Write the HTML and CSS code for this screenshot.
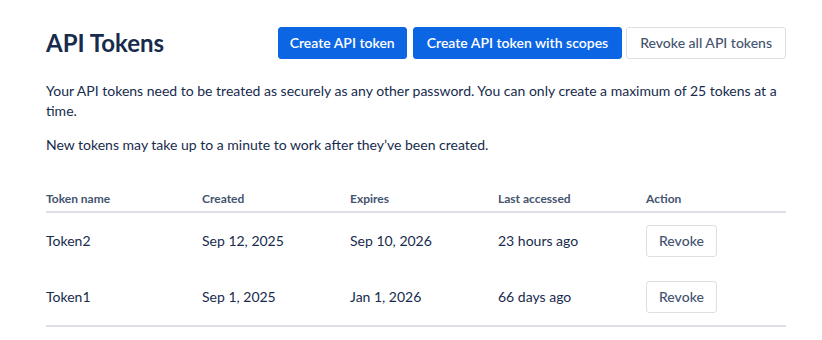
FILE: index.html
```html
<!DOCTYPE html>
<html>
<head>
<meta charset="utf-8">
<link rel="stylesheet" href="styles.css">
</head>
<body>
<main class="page">
  <header class="head">
    <h1 class="title">API Tokens</h1>
    <div class="actions">
      <button class="btn btn-primary btn-first">Create API token</button>
      <button class="btn btn-primary">Create API token with scopes</button>
      <button class="btn btn-default">Revoke all API tokens</button>
    </div>
  </header>
  <p class="desc">Your API tokens need to be treated as securely as any other password. You can only create a maximum of 25 tokens at a time.</p>
  <p class="desc">New tokens may take up to a minute to work after they’ve been created.</p>
  <table class="tokens">
    <thead>
      <tr>
        <th class="c1">Token name</th>
        <th class="c2">Created</th>
        <th class="c3">Expires</th>
        <th class="c4">Last accessed</th>
        <th class="c5">Action</th>
      </tr>
    </thead>
    <tbody>
      <tr>
        <td>Token2</td>
        <td>Sep 12, 2025</td>
        <td>Sep 10, 2026</td>
        <td>23 hours ago</td>
        <td><button class="btn btn-default btn-small">Revoke</button></td>
      </tr>
      <tr>
        <td>Token1</td>
        <td>Sep 1, 2025</td>
        <td>Jan 1, 2026</td>
        <td>66 days ago</td>
        <td><button class="btn btn-default btn-small">Revoke</button></td>
      </tr>
    </tbody>
  </table>
</main>
</body>
</html>
```
FILE: styles.css
```css
* { box-sizing: border-box; }
html, body { margin: 0; padding: 0; background: #fff; }
body {
  font-family: Lato, "Noto Sans", sans-serif;
  color: #172B4D;
  font-size: 14px;
  line-height: 20px;
}
.page {
  width: 740px;
  margin-left: 46px;
  padding-top: 27px;
}
.head {
  display: flex;
  justify-content: space-between;
  align-items: center;
  height: 32px;
}
.title {
  margin: 0;
  font-size: 24px;
  line-height: 28px;
  font-weight: 700;
  color: #172B4D;
}
.actions {
  display: flex;
  gap: 4px;
}
.btn {
  font-family: inherit;
  font-size: 14px;
  font-weight: 600;
  height: 32px;
  padding: 0 12px;
  border-radius: 3px;
  cursor: pointer;
  line-height: 30px;
}
.btn-primary {
  background: #0C66E4;
  color: #fff;
  border: 1px solid #0C66E4;
  padding: 0 13px;
}
.btn-first {
  margin-right: 2px;
  padding: 0 11px;
}
.btn-default {
  background: #fff;
  color: #44546F;
  border: 1px solid #DCDFE4;
  font-weight: 500;
  padding: 0 13px;
}
.btn-small { padding: 0 12px; }
.desc {
  margin: 0;
  margin-top: 22px;
}
.desc + .desc { margin-top: 14px; }
.tokens {
  margin-top: 36px;
  width: 740px;
  border-collapse: collapse;
  table-layout: fixed;
}
.tokens th {
  text-align: left;
  font-size: 12px;
  font-weight: 700;
  color: #44546F;
  line-height: 16px;
  padding: 0 0 4px 0;
  border-bottom: 2px solid #DCDFE4;
}
.c1 { width: 156px; }
.c2 { width: 148px; }
.c3 { width: 148px; }
.c4 { width: 148px; }
.c5 { width: 140px; }
.tokens td {
  padding: 12px 0;
  height: 56px;
  vertical-align: middle;
}
.tokens tbody tr:last-child td { border-bottom: 2px solid #DCDFE4; }
```
